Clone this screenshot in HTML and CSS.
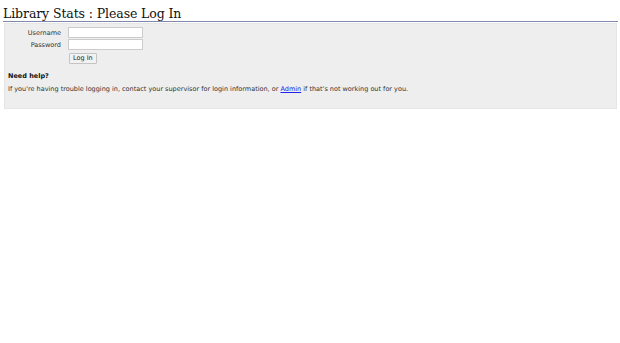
FILE: index.html
```html
<!DOCTYPE html>
<html lang="en">
<head>
  <meta charset="UTF-8">
  <title>Library Stats : Please Log In</title>
  <link rel="stylesheet" href="styles.css">
</head>
<body>
  <h1 class="page-title">Library Stats : Please Log In</h1>
  <div class="content">
    <form class="login">
      <table>
        <tr>
          <td class="label">Username</td>
          <td><input type="text" class="field"></td>
        </tr>
        <tr>
          <td class="label">Password</td>
          <td><input type="password" class="field"></td>
        </tr>
        <tr>
          <td></td>
          <td><button type="button" class="btn">Log In</button></td>
        </tr>
      </table>
    </form>
    <h4 class="help-title">Need help?</h4>
    <p class="help-text">If you're having trouble logging in, contact your supervisor for login information, or <a href="#">Admin</a> if that's not working out for you.</p>
  </div>
</body>
</html>
```
FILE: styles.css
```css
/* Base */
body {
  margin: 0;
  padding: 0 2px 0 3px;
  font-family: "DejaVu Sans", Verdana, sans-serif;
  font-size: 6.5px;
  color: #333;
  background: #fff;
}

/* Title */
.page-title {
  margin: 0;
  padding-top: 7px;
  font-family: "DejaVu Serif", Georgia, serif;
  font-weight: normal;
  font-size: 12.5px;
  line-height: 14px;
  letter-spacing: -0.1px;
  color: #111;
  border-bottom: 1px solid #8088ad;
}

/* Grey panel */
.content {
  margin: 1px 1px 0 1px;
  background: #eeeeee;
  border: 1px solid #e6e6e6;
  padding: 3px 3px 13px 3px;
  height: 68px;
}

.login table { border-collapse: collapse; }
.login td { padding: 0 0 1px 0; height: 11px; }
.login .label {
  width: 53px;
  text-align: right;
  padding-right: 7px;
  color: #333;
}
.field {
  display: block;
  width: 75px;
  height: 11px;
  margin: 0;
  padding: 0;
  box-sizing: border-box;
  border: 1px solid #cccccc;
  background: #fff;
}
.btn {
  margin: 2px 0 0 1px;
  height: 11px;
  padding: 0 3px;
  font-family: "DejaVu Sans", Verdana, sans-serif;
  font-size: 6.5px;
  line-height: 9px;
  background: #f2f2f2;
  border: 1px solid #c4c4c4;
  border-radius: 1px;
  color: #222;
}

.help-title {
  margin: 7px 0 0 0;
  font-size: 6.5px;
  font-weight: bold;
  color: #111;
}
.help-text {
  margin: 5px 0 0 0;
}
.help-text a { color: #2222ee; }
```
